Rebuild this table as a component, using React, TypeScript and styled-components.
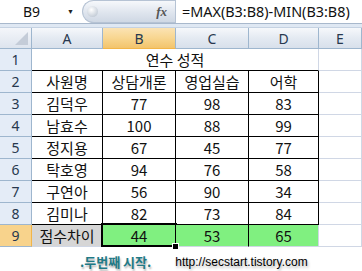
import styled, { createGlobalStyle } from "styled-components";

const GlobalStyle = createGlobalStyle`
  html, body {
    margin: 0;
    padding: 0;
    background: #fff;
  }
  body {
    font-family: "Noto Sans CJK KR", "Noto Sans", "Liberation Sans", sans-serif;
    color: #000;
  }
`;

const cols = ["A", "B", "C", "D", "E"];

const rows = [
  ["김덕우", 77, 98, 83],
  ["남효수", 100, 88, 99],
  ["정지용", 67, 45, 77],
  ["탁호영", 94, 76, 58],
  ["구연아", 56, 90, 34],
  ["김미나", 82, 73, 84],
];

const GRID = "#d0d7e5";
const HEAD_LINE = "#9eb6ce";

export default function App() {
  return (
    <>
      <GlobalStyle />
      <Window>
        <FormulaBar>
          <NameBox>
            <span>B9</span>
            <Arrow>▼</Arrow>
          </NameBox>
          <FxPill>
            <Knob />
            <Fx>fx</Fx>
          </FxPill>
          <FormulaInput>=MAX(B3:B8)-MIN(B3:B8)</FormulaInput>
        </FormulaBar>
        <Gap />
        <Sheet>
          <Corner>
            <CornerTri />
          </Corner>
          {cols.map((c) => (
            <ColHead key={c} active={c === "B"}>{c}</ColHead>
          ))}

          <RowHead>1</RowHead>
          <Title>연수 성적</Title>
          <Cell />

          <RowHead>2</RowHead>
          <Cell boxed>사원명</Cell>
          <Cell boxed>상담개론</Cell>
          <Cell boxed>영업실습</Cell>
          <Cell boxed>어학</Cell>
          <Cell />

          {rows.map((r, i) => (
            <Row key={i} n={i + 3} data={r} />
          ))}

          <RowHead active>9</RowHead>
          <Cell fill="#d6d6d6">점수차이</Cell>
          <Cell fill="#80f080" selected>44</Cell>
          <Cell fill="#80f080" rightDark>53</Cell>
          <Cell fill="#80f080">65</Cell>
          <Cell />
        </Sheet>
        <Footer>
          <Mark>.두번째 시작.</Mark>
          <Url>http://secstart.tistory.com</Url>
        </Footer>
      </Window>
    </>
  );
}

function Row({ n, data }: { n: number; data: (string | number)[] }) {
  return (
    <>
      <RowHead>{n}</RowHead>
      {data.map((v, i) => (
        <Cell key={i} boxed>{v}</Cell>
      ))}
      <Cell />
    </>
  );
}

const Window = styled.div`
  width: 362px;
  height: 271px;
  overflow: hidden;
  background: #fff;
`;

const FormulaBar = styled.div`
  display: flex;
  height: 23px;
  border-bottom: 1px solid #a8b8cc;
  background: #fff;
`;

const NameBox = styled.div`
  width: 82px;
  display: flex;
  align-items: center;
  justify-content: space-between;
  padding: 0 8px 0 23px;
  box-sizing: border-box;
  font-family: "Noto Sans", "Liberation Sans", sans-serif;
  font-size: 14px;
  color: #111;
`;

const Arrow = styled.span`
  font-size: 7px;
  color: #222;
`;

const FxPill = styled.div`
  width: 93px;
  display: flex;
  align-items: center;
  justify-content: space-between;
  padding: 0 8px 0 4px;
  box-sizing: border-box;
  border-radius: 12px 0 0 12px;
  border: 1px solid #b6c3d4;
  border-right: none;
  background: linear-gradient(#f6f8fb, #dfe5ee 55%, #cfd8e4);
`;

const Knob = styled.div`
  width: 11px;
  height: 11px;
  border-radius: 50%;
  background: radial-gradient(circle at 40% 35%, #fff, #c8d0da 70%, #aab5c3);
`;

const Fx = styled.span`
  font-family: "Liberation Serif", serif;
  font-style: italic;
  font-size: 13px;
  font-weight: bold;
  color: #555;
`;

const FormulaInput = styled.div`
  flex: 1;
  display: flex;
  align-items: center;
  padding-left: 6px;
  border-left: 1px solid #b6c3d4;
  font-family: "Noto Sans", "Liberation Sans", sans-serif;
  font-size: 14.4px;
  color: #111;
  white-space: nowrap;
`;

const Gap = styled.div`
  height: 3px;
  background: #dfe8f3;
  border-bottom: 1px solid #c5d2e2;
`;

const Sheet = styled.div`
  display: grid;
  grid-template-columns: 32px 71px 73px 73px 70px 1fr;
  grid-template-rows: 21px repeat(9, 22px);
`;

const Corner = styled.div`
  position: relative;
  background: linear-gradient(#f4f6fa, #dde4ee);
  border-right: 1px solid ${HEAD_LINE};
  border-bottom: 1px solid ${HEAD_LINE};
`;

const CornerTri = styled.div`
  position: absolute;
  right: 3px;
  bottom: 3px;
  width: 0;
  height: 0;
  border-left: 13px solid transparent;
  border-bottom: 13px solid #c4ccd8;
`;

const ColHead = styled.div<{ active?: boolean }>`
  display: flex;
  align-items: center;
  justify-content: center;
  font-family: "Noto Sans", "Liberation Sans", sans-serif;
  font-size: 14px;
  color: #27384e;
  background: ${(p) =>
    p.active
      ? "linear-gradient(#fbe3b4, #f8d690 50%, #f3c46c)"
      : "linear-gradient(#f6f8fb, #e4eaf2 50%, #d8e0eb)"};
  border-right: 1px solid ${HEAD_LINE};
  border-bottom: 1px solid ${(p) => (p.active ? "#f2b548" : HEAD_LINE)};
`;

const RowHead = styled.div<{ active?: boolean }>`
  display: flex;
  align-items: center;
  justify-content: center;
  font-family: "Noto Sans", "Liberation Sans", sans-serif;
  font-size: 14px;
  color: #27384e;
  background: ${(p) => (p.active ? "#f8d38c" : "#e4ecf7")};
  border-right: 1px solid ${(p) => (p.active ? "#f2b548" : HEAD_LINE)};
  border-bottom: 1px solid ${HEAD_LINE};
`;

const Cell = styled.div<{
  boxed?: boolean;
  fill?: string;
  selected?: boolean;
  rightDark?: boolean;
}>`
  position: relative;
  display: flex;
  align-items: flex-end;
  justify-content: center;
  padding-bottom: 1px;
  box-sizing: border-box;
  font-size: 15px;
  line-height: 19px;
  color: #111;
  background: ${(p) => p.fill ?? "#fff"};
  border-right: 1px solid ${(p) => (p.boxed || p.rightDark ? "#000" : GRID)};
  border-bottom: 1px solid ${(p) => (p.boxed ? "#000" : GRID)};
  ${(p) =>
    p.selected &&
    `
    &::after {
      content: "";
      position: absolute;
      inset: -2px -2px -1px -2px;
      border: 2px solid #000;
      pointer-events: none;
    }
    &::before {
      content: "";
      position: absolute;
      right: -4px;
      bottom: -4px;
      width: 5px;
      height: 5px;
      background: #000;
      border: 1px solid #fff;
      z-index: 2;
    }
  `}
`;

const Title = styled.div`
  grid-column: span 4;
  display: flex;
  align-items: flex-end;
  justify-content: center;
  padding-bottom: 1px;
  font-size: 15px;
  line-height: 19px;
  color: #111;
  border-right: 1px solid ${GRID};
  border-bottom: 1px solid #000;
`;

const Footer = styled.div`
  display: flex;
  align-items: center;
  height: 25px;
  padding: 4px 0 0 80px;
  box-sizing: border-box;
  gap: 24px;
`;

const Mark = styled.span`
  font-size: 13px;
  font-weight: bold;
  color: #1f7a86;
  text-shadow: 1px 2px 2px rgba(0, 0, 0, 0.3);
`;

const Url = styled.span`
  font-family: "Liberation Sans", sans-serif;
  font-size: 12px;
  color: #000;
  text-shadow: 1px 2px 3px rgba(0, 0, 0, 0.35);
`;
